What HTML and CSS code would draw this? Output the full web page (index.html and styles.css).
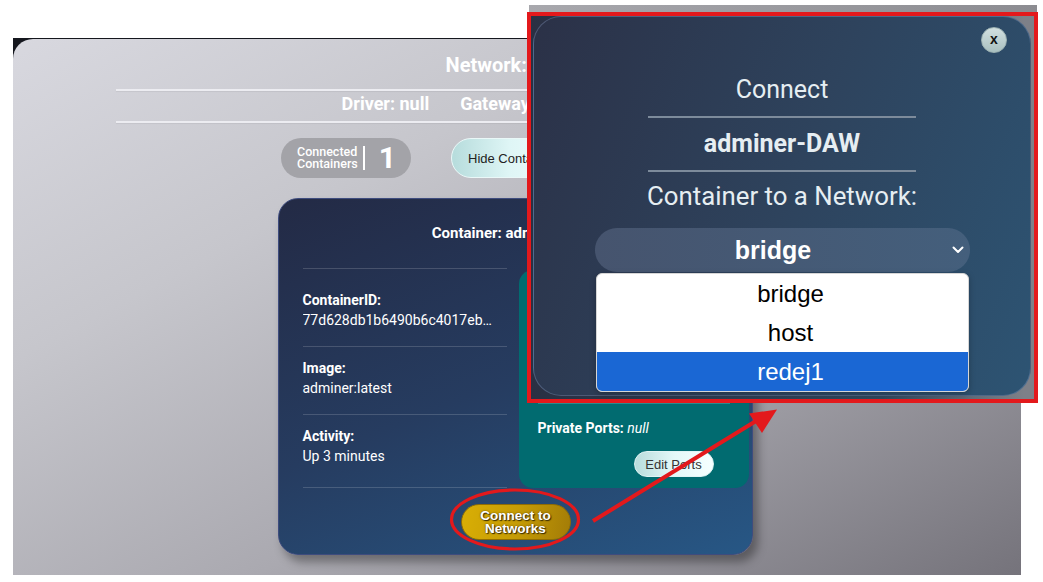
FILE: index.html
```html
<!DOCTYPE html>
<html>
<head>
<meta charset="utf-8">
<title>Network</title>
<link rel="stylesheet" href="styles.css">
</head>
<body>
<div class="backdrop">
  <main class="panel">
    <h1 class="net-title">Network: redej1</h1>
    <div class="rule"></div>
    <div class="meta"><span>Driver: null</span><span>Gateway: null</span><span>Subnet: null</span></div>
    <div class="rule rule-2"></div>
    <div class="actions">
      <div class="count-pill">
        <span class="count-label">Connected<br>Containers</span>
        <span class="count-sep"></span>
        <span class="count-num">1</span>
      </div>
      <button class="btn-light">Hide Containers</button>
      <button class="btn-light">Delete Network</button>
    </div>
    <section class="card">
      <h2 class="card-title">Container: adminer-DAW</h2>
      <div class="card-body">
        <div class="info">
          <div class="info-row row-first"><b>ContainerID:</b><span class="ellip">77d628db1b6490b6c4017eb5a2f0c1d9e8b7</span></div>
          <div class="info-row"><b>Image:</b><span>adminer:latest</span></div>
          <div class="info-row row-last"><b>Activity:</b><span>Up 3 minutes</span></div>
        </div>
        <div class="ports">
          <div class="ports-line"><b>Public Ports:</b> <i>null</i></div>
          <div class="ports-rule"></div>
          <div class="ports-line ports-private"><b>Private Ports:</b> <i>null</i></div>
          <button class="btn-edit">Edit Ports</button>
        </div>
      </div>
      <button class="btn-gold">Connect to<br>Networks</button>
    </section>
  </main>
</div>

<div class="shot">
  <div class="modal">
    <div class="modal-top"><button class="close">x</button></div>
    <p class="m-text m-first">Connect</p>
    <div class="m-rule"></div>
    <p class="m-text m-bold">adminer-DAW</p>
    <div class="m-rule"></div>
    <p class="m-text m-sub">Container to a Network:</p>
    <div class="select">
      <span class="select-value">bridge</span>
      <svg class="chev" width="12" height="8" viewBox="0 0 12 8"><polyline points="1.5,1.5 6,6 10.5,1.5" fill="none" stroke="#ffffff" stroke-width="2" stroke-linecap="round" stroke-linejoin="round"/></svg>
    </div>
    <ul class="options">
      <li>bridge</li>
      <li>host</li>
      <li class="selected">redej1</li>
    </ul>
  </div>
</div>

<svg class="annot" width="1043" height="582" viewBox="0 0 1043 582">
  <ellipse cx="515" cy="519.5" rx="63.5" ry="29.5" fill="none" stroke="#e3191c" stroke-width="3.2"/>
  <line x1="593" y1="521" x2="756" y2="421" stroke="#e3191c" stroke-width="4"/>
  <polygon points="749,413.5 777,409.5 762,433" fill="#e3191c"/>
</svg>
</body>
</html>
```

FILE: styles.css
```css
* { box-sizing: border-box; }
html, body { margin: 0; }
body {
  width: 1043px;
  height: 582px;
  overflow: hidden;
  position: relative;
  background: #ffffff;
  font-family: Roboto, "Liberation Sans", Arial, sans-serif;
  padding: 38px 0 0 13px;
}

.backdrop {
  width: 1008px;
  height: 537px;
  background: #15171e;
  padding-top: 1px;
}

.panel {
  height: 536px;
  border-top-left-radius: 20px;
  background: linear-gradient(152deg, #d8d8df 0%, #c6c6cc 30%, #aaa9b0 62%, #75737b 100%);
  display: flex;
  flex-direction: column;
  align-items: center;
  padding-top: 13px;
  overflow: hidden;
}

.net-title {
  margin: 0;
  font-size: 20px;
  line-height: 24px;
  font-weight: 700;
  color: #ffffff;
  padding-top: 1px;
}

.rule {
  width: 802px;
  height: 2px;
  background: #ececf1;
  margin-top: 12px;
  box-shadow: 0 1px 1px rgba(0,0,0,0.06);
}
.rule-2 { margin-top: 7px; }

.meta {
  margin-top: 3px;
  display: flex;
  gap: 31px;
  font-size: 18px;
  line-height: 20px;
  font-weight: 700;
  color: #ffffff;
  margin-left: 4px;
}

.actions {
  margin-top: 15px;
  display: flex;
  gap: 40px;
  height: 40px;
}

.count-pill {
  width: 130px;
  height: 40px;
  border-radius: 20px;
  background: #a3a3a8;
  display: flex;
  align-items: center;
  padding-left: 16px;
  color: #ffffff;
}
.count-label {
  font-size: 12.5px;
  line-height: 12px;
  font-weight: 500;
  letter-spacing: 0;
}
.count-sep {
  width: 2px;
  height: 24px;
  background: #ffffff;
  margin-left: 5px;
}
.count-num {
  font-size: 30px;
  font-weight: 700;
  margin-left: 14px;
  line-height: 30px;
}

.btn-light {
  width: 131px;
  height: 40px;
  border-radius: 20px;
  border: 1px solid #eaf8f8;
  background: linear-gradient(90deg, #b6dcdc 0%, #dff6f6 45%, #f2ffff 100%);
  font-family: "Liberation Sans", Arial, sans-serif;
  font-size: 13px;
  color: #222222;
  text-align: left;
  padding: 0 0 0 16px;
}

.card {
  margin-top: 20px;
  margin-right: 4px;
  width: 475px;
  height: 357px;
  border: 1px solid #3e4c7e;
  border-radius: 20px;
  background: linear-gradient(158deg, #232a45 0%, #263c60 50%, #275785 100%);
  box-shadow: 5px 7px 10px rgba(0,0,0,0.35);
  padding: 24px 3px 14px 4px;
  display: flex;
  flex-direction: column;
  align-items: center;
  color: #ffffff;
}
.card-title {
  margin: 0;
  font-size: 15px;
  line-height: 20px;
  font-weight: 700;
}
.card-body {
  margin-top: 25px;
  align-self: stretch;
  display: flex;
  gap: 12px;
  padding-left: 20px;
  height: 220px;
}
.info {
  width: 204px;
  display: flex;
  flex-direction: column;
  font-size: 14px;
  line-height: 20px;
}
.info-row {
  border-top: 1px solid rgba(255,255,255,0.16);
  padding: 11px 0 16px;
  display: flex;
  flex-direction: column;
}
.row-first { padding-top: 21px; }
.row-last { padding-bottom: 21px; border-bottom: 1px solid rgba(255,255,255,0.16); }
.info-row b { font-weight: 700; }
.ellip {
  white-space: nowrap;
  overflow: hidden;
  text-overflow: ellipsis;
  width: 197px;
}

.ports {
  width: 230px;
  margin-top: 2px;
  border-radius: 14px;
  background: #016b70;
  padding: 0 19px 11px 19px;
  display: flex;
  flex-direction: column;
  justify-content: flex-end;
  font-size: 14px;
  line-height: 20px;
}
.ports-rule {
  height: 1px;
  background: rgba(120,200,200,0.35);
  margin-top: 16px;
}
.ports-private { margin-top: 14px; }
.ports-line i { font-style: italic; }
.btn-edit {
  align-self: flex-end;
  margin: 13px 16px 0 0;
  width: 80px;
  height: 26px;
  border-radius: 13px;
  border: 1px solid #e0f4f4;
  background: linear-gradient(90deg, #b8dcdc 0%, #e4f8f8 50%, #f6ffff 100%);
  font-family: "Liberation Sans", Arial, sans-serif;
  font-size: 13px;
  color: #333333;
  padding: 0;
}

.btn-gold {
  margin-top: 16px;
  width: 110px;
  height: 36px;
  border-radius: 18px;
  border: 1px solid #8f6c04;
  background: linear-gradient(100deg, #d9af05 0%, #c69c05 50%, #a37c07 100%);
  font-family: "Liberation Sans", Arial, sans-serif;
  font-weight: 700;
  font-size: 13.5px;
  line-height: 13px;
  color: #ffffff;
  text-shadow: 1px 1px 1px #3a2c00, 0 0 2px #5a4400;
  padding: 0;
}

/* screenshot overlay: the modal inside a red annotation frame */
.shot {
  position: absolute;
  left: 527px;
  top: 12px;
  width: 511px;
  height: 391px;
  border: 4px solid #e3191c;
  background: linear-gradient(90deg, #2a3043 0%, #2f485e 70%, #7e8088 98%);
}
.shot::before {
  content: "";
  position: absolute;
  top: -11px;
  left: -2px;
  right: -3px;
  height: 7px;
  background: linear-gradient(90deg, #a8a8ad, #8c8c91);
}

.modal {
  margin-left: 2px;
  width: 498px;
  height: 380px;
  border-radius: 28px;
  border: 1px solid rgba(140,160,200,0.35);
  background: linear-gradient(112deg, #2b3147 0%, #2e435d 50%, #2d5473 100%);
  display: flex;
  flex-direction: column;
  align-items: center;
  color: #e6eef2;
}
.modal-top {
  align-self: stretch;
  display: flex;
  justify-content: flex-end;
  padding: 10px 23px 0 0;
}
.close {
  width: 26px;
  height: 26px;
  border-radius: 50%;
  border: 1px solid #9fb4b4;
  background: linear-gradient(180deg, #d2e0e0 0%, #a9c0c0 100%);
  font-family: "Liberation Sans", Arial, sans-serif;
  font-weight: 700;
  font-size: 14px;
  line-height: 14px;
  color: #111111;
  padding: 0 0 2px;
}
.m-text {
  margin: 11px 0 0;
  font-size: 25px;
  line-height: 30px;
}
.m-first { margin-top: 22px; }
.m-bold { font-weight: 700; }
.m-sub { margin-top: 9px; font-size: 25.8px; }
.m-rule {
  width: 268px;
  height: 2px;
  background: #7d8b9b;
  margin-top: 11px;
}

.select {
  margin-top: 17px;
  width: 375px;
  height: 44px;
  border-radius: 22px;
  background: linear-gradient(90deg, #46546e 0%, #445f7c 100%);
  display: flex;
  align-items: center;
  padding: 0 6px 0 0;
  color: #ffffff;
}
.select-value {
  flex: 1;
  text-align: center;
  font-family: "Liberation Sans", Arial, sans-serif;
  font-weight: 700;
  font-size: 25px;
}
.chev { display: block; }

.options {
  list-style: none;
  margin: 1px 0 0;
  padding: 0;
  width: 373px;
  background: #ffffff;
  border: 1px solid #d6d6d6;
  border-radius: 6px;
  overflow: hidden;
  box-shadow: 0 2px 6px rgba(0,0,0,0.25);
  font-family: "Liberation Sans", Arial, sans-serif;
  font-size: 24px;
  color: #000000;
}
.options li {
  height: 39px;
  line-height: 39px;
  text-align: center;
  padding-left: 17px;
}
.options .selected {
  background: #1a67d4;
  color: #ffffff;
}

.annot {
  position: absolute;
  left: 0;
  top: 0;
  pointer-events: none;
}
```
